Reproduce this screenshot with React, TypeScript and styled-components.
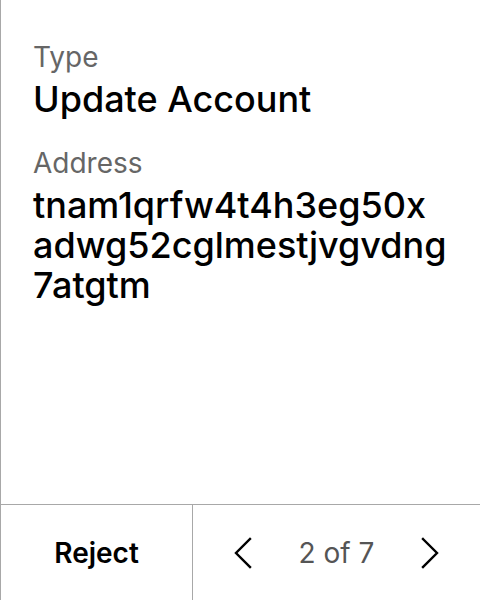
import React from "react";
import styled, { createGlobalStyle } from "styled-components";

const Global = createGlobalStyle`
  html, body { margin: 0; padding: 0; background: #fff; }
  body { font-family: Inter, "Noto Sans", sans-serif; color: #000; }
`;

const Frame = styled.div`
  width: 480px;
  height: 600px;
  box-sizing: border-box;
  border-left: 1px solid #a8a8a8;
  display: flex;
  flex-direction: column;
`;

const Content = styled.div`
  flex: 1;
  padding: 39px 32px 0 32px;
  display: flex;
  flex-direction: column;
  gap: 26px;
`;

const Field = styled.div`
  display: flex;
  flex-direction: column;
  gap: 4px;
`;

const Label = styled.div`
  font-size: 28px;
  line-height: 36px;
  color: #666;
`;

const Value = styled.div`
  font-size: 36px;
  line-height: 40px;
  font-weight: 500;
  word-break: break-all;
`;

const ValueLine = styled.span`
  display: block;
`;

const Footer = styled.div`
  height: 96px;
  border-top: 1px solid #a8a8a8;
  display: grid;
  grid-template-columns: 192px 1fr;
  box-sizing: border-box;
`;

const RejectButton = styled.button`
  all: unset;
  display: flex;
  align-items: center;
  justify-content: center;
  font-family: Inter, sans-serif;
  font-weight: 600;
  font-size: 28px;
  border-right: 1px solid #a8a8a8;
`;

const Pager = styled.div`
  display: flex;
  align-items: center;
  justify-content: space-between;
  padding: 0 40px;
`;

const PageText = styled.span`
  font-size: 28px;
  color: #555;
`;

const Chevron = ({ dir }: { dir: "left" | "right" }) => (
  <svg width="20" height="34" viewBox="0 0 20 34" fill="none">
    <path
      d={dir === "left" ? "M17 3 L3 17 L17 31" : "M3 3 L17 17 L3 31"}
      stroke="#000"
      strokeWidth="2.4"
      strokeLinecap="square"
    />
  </svg>
);

const addressLines = ["tnam1qrfw4t4h3eg50x", "adwg52cglmestjvgvdng", "7atgtm"];

export default function App() {
  return (
    <>
      <Global />
      <Frame>
        <Content>
          <Field>
            <Label>Type</Label>
            <Value>Update Account</Value>
          </Field>
          <Field>
            <Label>Address</Label>
            <Value>
              {addressLines.map((l) => (
                <ValueLine key={l}>{l}</ValueLine>
              ))}
            </Value>
          </Field>
        </Content>
        <Footer>
          <RejectButton>Reject</RejectButton>
          <Pager>
            <Chevron dir="left" />
            <PageText>2 of 7</PageText>
            <Chevron dir="right" />
          </Pager>
        </Footer>
      </Frame>
    </>
  );
}
